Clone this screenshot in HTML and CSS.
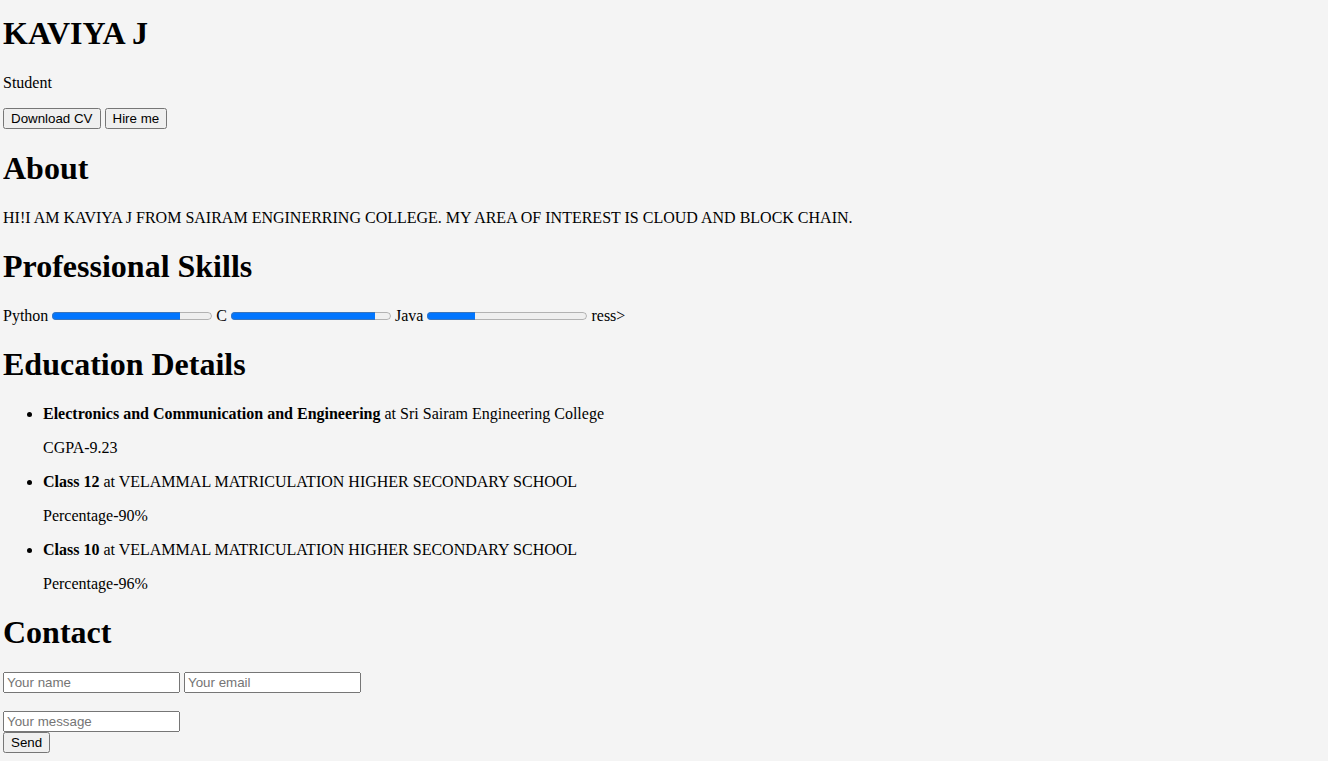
FILE: index.html
```html
<!DOCTYPE html>
<html>
<head>
<meta charset="utf-8">
<title>KAVIYA J</title>
<link rel="stylesheet" href="styles.css">
</head>
<body class="page">
<h1 class="title first">KAVIYA J</h1>
<p class="text">Student</p>
<button class="btn">Download CV</button> <button class="btn">Hire me</button>
<h1 class="title">About</h1>
<p class="text">HI!I AM KAVIYA J FROM SAIRAM ENGINERRING COLLEGE. MY AREA OF INTEREST IS CLOUD AND BLOCK CHAIN.</p>
<h1 class="title">Professional Skills</h1>
<div class="skills">Python <progress class="bar" value="80" max="100"></progress> C <progress class="bar" value="90" max="100"></progress> Java <progress class="bar" value="30" max="100"></progress> ress&gt;</div>
<h1 class="title">Education Details</h1>
<ul class="edu">
<li><strong>Electronics and Communication and Engineering</strong> at Sri Sairam Engineering College<p class="text">CGPA-9.23</p></li>
<li><strong>Class 12</strong> at VELAMMAL MATRICULATION HIGHER SECONDARY SCHOOL<p class="text">Percentage-90%</p></li>
<li><strong>Class 10</strong> at VELAMMAL MATRICULATION HIGHER SECONDARY SCHOOL<p class="text">Percentage-96%</p></li>
</ul>
<h1 class="title">Contact</h1>
<form class="form">
<input class="field" type="text" placeholder="Your name"> <input class="field" type="email" placeholder="Your email"><br><br>
<input class="field" type="text" placeholder="Your message"><br>
<button class="btn" type="button">Send</button>
</form>
</body>
</html>
```
FILE: styles.css
```css
html { background: #f4f4f4; }
.page {
  margin: 0 3px;
  font-family: "Liberation Serif", "Times New Roman", serif;
  font-size: 16px;
  color: #000;
  background: #f4f4f4;
}
.title {
  font-size: 32px;
  font-weight: bold;
  margin: 21.44px 0;
}
.title.first { margin-top: 15.44px; }
.text { margin: 16px 0; }
.btn, .field {
  font-family: "Liberation Sans", Arial, sans-serif;
  font-size: 13.33px;
}
.field { width: 177px; box-sizing: border-box; }
.edu { padding-left: 40px; margin: 16px 0; }
.bar { width: 160px; height: 16px; vertical-align: -0.2em; }
.form { margin: 0; }
```
